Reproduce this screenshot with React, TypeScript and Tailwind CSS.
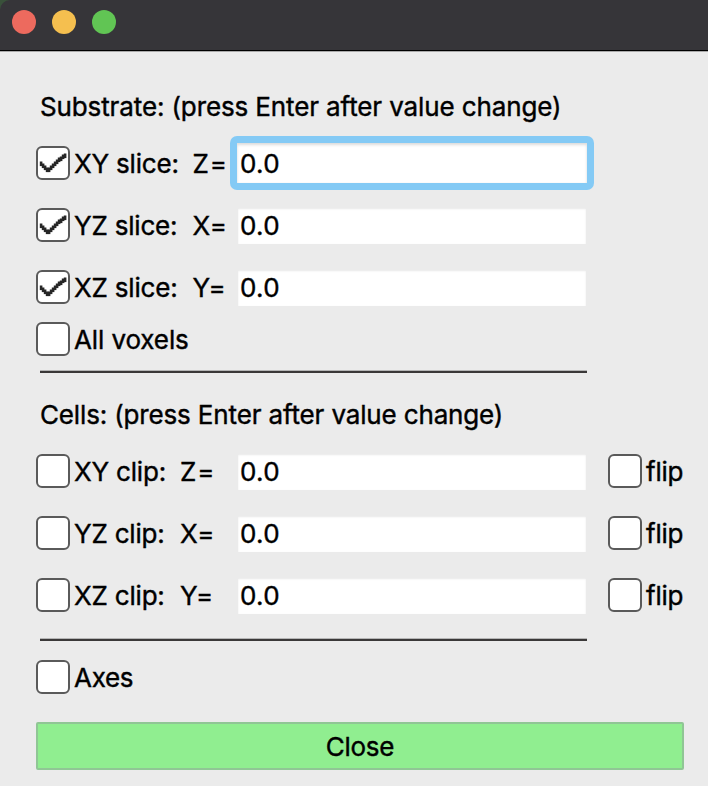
const font =
  'font-["Inter","Liberation_Sans",sans-serif] text-[26px] leading-[34px] text-black whitespace-pre [-webkit-text-stroke:0.4px_black]';

const checkColumns = [8, 10, 12, 14, 14, 12, 10, 8, 6, 4, 3, 1, 0];

function Box({ checked = false }: { checked?: boolean }) {
  return (
    <span className="block h-[34px] w-[34px] shrink-0 rounded-[6px] border-2 border-[#5a5a5a] bg-white">
      {checked && (
        <svg width="30" height="30" viewBox="0 0 30 30" className="block">
          {checkColumns.map((y, i) => (
            <rect key={i} x={1.8 + i * 2} y={5.5 + y} width="2.6" height="4.6" fill="#262626" />
          ))}
        </svg>
      )}
    </span>
  );
}

function Field({ focused = false }: { focused?: boolean }) {
  return focused ? (
    <div className="-my-[10px] -ml-2 flex h-[54px] w-[364px] shrink-0 items-center rounded-[7px] bg-[#84caf5] p-[7px]">
      <div className="h-10 w-full bg-white pl-[3px] pt-[4px] tracking-[0.3px] shadow-[inset_0_2px_3px_#dcdcdc,inset_0_0_1px_#dddddd]">0.0</div>
    </div>
  ) : (
    <div className="h-9 w-[348px] shrink-0 bg-white pl-[2px] pt-[1px] tracking-[0.3px] shadow-[inset_0_1px_2px_#e8e8e8]">0.0</div>
  );
}

function Row({
  label, axis, checked = false, focused = false, flip = false, axisClass,
}: {
  label: string; axis: string; checked?: boolean; focused?: boolean; flip?: boolean; axisClass: string;
}) {
  return (
    <div className="flex h-[34px] items-start">
      <Box checked={checked} />
      <div className="flex w-[168px] shrink-0 pl-[4px] pt-px">
        <span className={`shrink-0 tracking-[-0.2px] ${axisClass}`}>{label}</span>
        <span className="tracking-[0.9px]">{axis}</span>
      </div>
      <Field focused={focused} />
      {flip && (
        <div className="ml-[22px] flex">
          <Box />
          <span className="pl-[4px] pt-px tracking-[-0.2px]">flip</span>
        </div>
      )}
    </div>
  );
}

function Rule() {
  return <div className="ml-1 h-[3px] w-[547px] border-t border-[#b5b5b5] bg-[#3a3838]" />;
}

export default function App() {
  return (
    <div className={`h-[786px] w-[708px] overflow-hidden bg-[#ebebeb] ${font}`}>
      <div className="bg-[#39513a]">
        <header className="flex h-[51px] gap-4 rounded-tl-[10px] border-b border-black bg-[#363539] pl-3 pt-[10px]">
          <span className="h-6 w-6 rounded-full bg-[#ed6a5e]" />
          <span className="h-6 w-6 rounded-full bg-[#f5bf4f]" />
          <span className="h-6 w-6 rounded-full bg-[#61c554]" />
        </header>
      </div>
      <div className="h-px bg-[#aaaaaa]" />
      <main className="flex flex-col px-9">
        <div className="mt-[38px] h-[34px] pl-1 tracking-[-0.12px]">Substrate: (press Enter after value change)</div>
        <div className="mt-[22px] flex flex-col gap-7">
          <Row label="XY slice:" axis="Z=" axisClass="w-[118.5px]" checked focused />
          <Row label="YZ slice:" axis="X=" axisClass="w-[118.5px]" checked />
          <Row label="XZ slice:" axis="Y=" axisClass="w-[118.5px]" checked />
        </div>
        <div className="mt-[18px] flex h-[34px]">
          <Box />
          <span className="pl-[4px] pt-px tracking-[-0.1px]">All voxels</span>
        </div>
        <div className="mt-[14px]"><Rule /></div>
        <div className="mt-[25px] h-[34px] pl-1 tracking-[-0.15px]">Cells: (press Enter after value change)</div>
        <div className="mt-[22px] flex flex-col gap-7">
          <Row label="XY clip:" axis="Z=" axisClass="w-[106px]" flip />
          <Row label="YZ clip:" axis="X=" axisClass="w-[106px]" flip />
          <Row label="XZ clip:" axis="Y=" axisClass="w-[106px]" flip />
        </div>
        <div className="mt-[26px]"><Rule /></div>
        <div className="mt-[19px] flex h-[34px]">
          <Box />
          <span className="pl-[4px] pt-px tracking-[-0.3px]">Axes</span>
        </div>
        <button className="mt-7 flex h-12 w-[648px] items-center justify-center rounded-[2px] border-2 border-[#90c695] bg-[#90ee90] pt-[2px] tracking-[-0.3px]">
          Close
        </button>
      </main>
    </div>
  );
}
